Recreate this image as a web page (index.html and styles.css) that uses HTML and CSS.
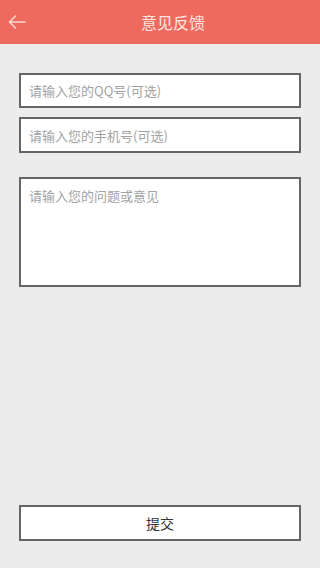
FILE: index.html
```html
<!DOCTYPE html>
<html lang="zh">
<head>
<meta charset="utf-8">
<meta name="viewport" content="width=device-width, initial-scale=1">
<title>意见反馈</title>
<link rel="stylesheet" href="styles.css">
</head>
<body>
<div class="page">
  <header class="topbar">
    <button class="back" type="button" aria-label="返回">
      <svg width="18" height="14" viewBox="0 0 18 14" fill="none" stroke="#fcd9d3" stroke-width="1.6" stroke-linecap="round" stroke-linejoin="round">
        <path d="M17 7H1.5M7.5 1L1.5 7l6 6"/>
      </svg>
    </button>
    <h1 class="title">意见反馈</h1>
  </header>
  <main class="form">
    <input class="field" type="text" placeholder="请输入您的QQ号(可选)">
    <input class="field field-phone" type="text" placeholder="请输入您的手机号(可选)">
    <textarea class="area" placeholder="请输入您的问题或意见"></textarea>
    <button class="submit" type="button">提交</button>
  </main>
</div>
</body>
</html>
```
FILE: styles.css
```css
* { box-sizing: border-box; }
html, body { margin: 0; padding: 0; }
body {
  background: #ececec;
  font-family: "Noto Sans CJK SC", "Noto Sans", sans-serif;
}
.page {
  display: flex;
  flex-direction: column;
  height: 568px;
}
.topbar {
  height: 44px;
  background: #ee6a5f;
  display: flex;
  align-items: center;
  flex-shrink: 0;
}
.back {
  width: 34px;
  height: 44px;
  border: 0;
  background: transparent;
  padding: 0 0 0 8px;
  display: flex;
  align-items: center;
}
.title {
  margin: 0 0 0 107px;
  font-size: 16px;
  font-weight: normal;
  color: #fde6e2;
  line-height: 44px;
}
.form {
  flex: 1;
  display: flex;
  flex-direction: column;
  padding: 29px 19px 27px 19px;
}
.field, .area, .submit {
  width: 282px;
  border: 2px solid #666;
  background: #fff;
  font-family: "Noto Sans CJK SC", "Noto Sans", sans-serif;
  font-size: 13px;
  color: #333;
  outline: none;
  margin: 0;
}
.field {
  height: 35px;
  padding: 0 8px;
}
.field-phone {
  margin-top: 9px;
  height: 36px;
}
.area {
  margin-top: 24px;
  height: 110px;
  padding: 8px 8px;
  resize: none;
  line-height: 18px;
}
.field::placeholder, .area::placeholder { color: #a2a2a2; }
.submit {
  margin-top: auto;
  height: 36px;
  font-size: 14px;
  color: #333;
}
```
